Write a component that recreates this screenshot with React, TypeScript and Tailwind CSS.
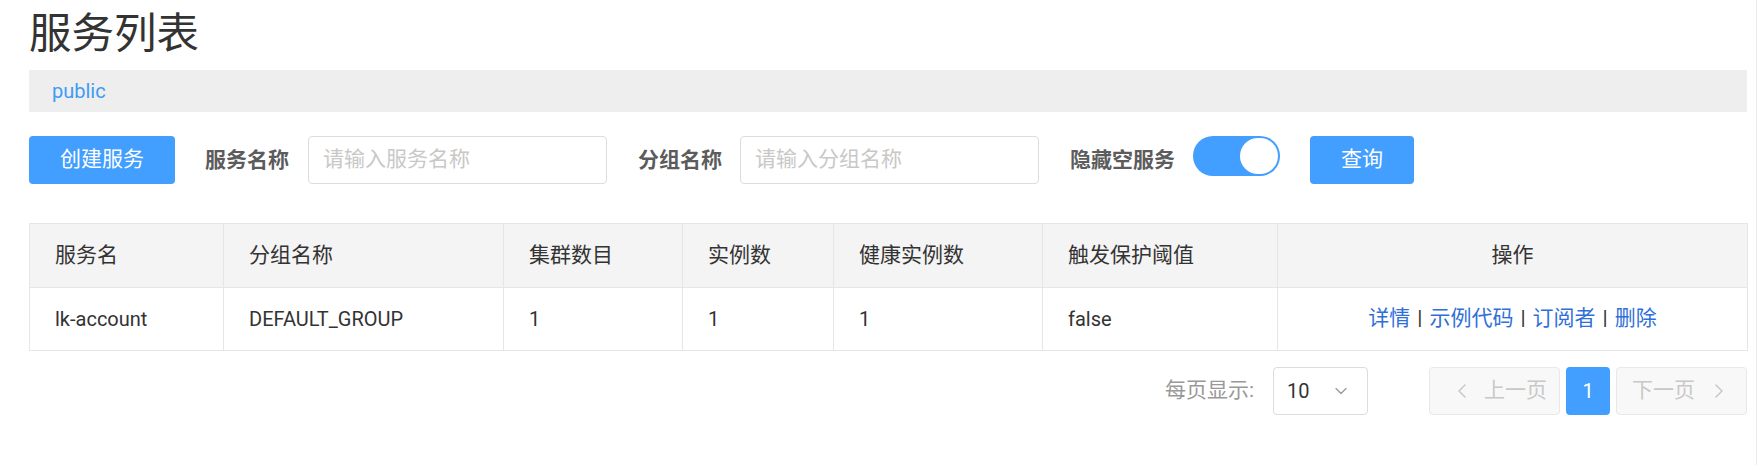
import { ChevronDown, ChevronLeft, ChevronRight } from 'lucide-react';

const columns = [
  { title: '服务名', width: 'w-[194px]' },
  { title: '分组名称', width: 'w-[280px]' },
  { title: '集群数目', width: 'w-[179px]' },
  { title: '实例数', width: 'w-[151px]' },
  { title: '健康实例数', width: 'w-[209px]' },
  { title: '触发保护阈值', width: 'w-[235px]' },
  { title: '操作', width: 'w-[470px]' },
];

const services = [
  {
    name: 'lk-account',
    group: 'DEFAULT_GROUP',
    clusterCount: 1,
    ipCount: 1,
    healthyInstanceCount: 1,
    triggerFlag: 'false',
  },
];

const actions = ['详情', '示例代码', '订阅者', '删除'];

export default function App() {
  return (
    <div className="min-h-[465px] bg-white border-r border-[#ebebeb] pl-[29px] pr-[9px] font-[Roboto,'Noto_Sans_CJK_SC',sans-serif] text-[#333]">
      {/* Title */}
      <h1 className="pt-[10px] text-[42.5px] leading-[48px] font-normal text-[#333]">服务列表</h1>

      {/* Namespace bar */}
      <div className="mt-[12px] h-[42px] bg-[#eeeeee] pl-[23px] flex items-center">
        <span className="text-[20px] text-[#3f9bf4]">public</span>
      </div>

      {/* Toolbar */}
      <div className="mt-[24px] flex items-start">
        <button className="h-[48px] w-[146px] rounded-[4px] bg-[#429eff] text-[21px] text-white">创建服务</button>

        <span className="ml-[30px] h-[48px] leading-[48px] text-[21px] font-bold text-[#5c5c5c]">服务名称</span>
        <div className="ml-[19px] h-[48px] w-[299px] rounded-[4px] border border-[#dcdcdc] pl-[14px] flex items-center text-[21px] text-[#c8c8c8]">
          请输入服务名称
        </div>

        <span className="ml-[31px] h-[48px] leading-[48px] text-[21px] font-bold text-[#5c5c5c]">分组名称</span>
        <div className="ml-[18px] h-[48px] w-[299px] rounded-[4px] border border-[#dcdcdc] pl-[14px] flex items-center text-[21px] text-[#c8c8c8]">
          请输入分组名称
        </div>

        <span className="ml-[31px] h-[48px] leading-[48px] text-[21px] font-bold text-[#5c5c5c]">隐藏空服务</span>
        <div className="ml-[18px] h-[40px] w-[87px] rounded-full bg-[#429eff] flex items-center justify-end pr-[2px]">
          <div className="h-[36px] w-[38px] rounded-full bg-white" />
        </div>

        <button className="ml-[30px] h-[48px] w-[104px] rounded-[4px] bg-[#429eff] text-[21px] text-white">查询</button>
      </div>

      {/* Table */}
      <table className="mt-[39px] w-[1718px] table-fixed border-collapse border border-[#e6e6e6] text-[20px]">
        <thead>
          <tr className="h-[64px] bg-[#f4f4f4]">
            {columns.map((col, i) => (
              <th
                key={col.title}
                className={`${col.width} border border-[#e6e6e6] px-[25px] text-[21px] font-normal text-[#333] ${
                  i === columns.length - 1 ? 'text-center' : 'text-left'
                }`}
              >
                {col.title}
              </th>
            ))}
          </tr>
        </thead>
        <tbody>
          {services.map((s) => (
            <tr key={s.name} className="h-[63px]">
              <td className="border border-[#e6e6e6] px-[25px]">{s.name}</td>
              <td className="border border-[#e6e6e6] px-[25px]">{s.group}</td>
              <td className="border border-[#e6e6e6] px-[25px]">{s.clusterCount}</td>
              <td className="border border-[#e6e6e6] px-[25px]">{s.ipCount}</td>
              <td className="border border-[#e6e6e6] px-[25px]">{s.healthyInstanceCount}</td>
              <td className="border border-[#e6e6e6] px-[25px]">{s.triggerFlag}</td>
              <td className="border border-[#e6e6e6] px-[25px] text-center text-[21px]">
                {actions.map((a, i) => (
                  <span key={a}>
                    {i > 0 && <span className="mx-[7px] text-[#333]">|</span>}
                    <a className="text-[#2f6fd9] cursor-pointer">{a}</a>
                  </span>
                ))}
              </td>
            </tr>
          ))}
        </tbody>
      </table>

      {/* Pagination */}
      <div className="mt-[16px] flex items-center justify-end text-[21px]">
        <span className="text-[#999]">每页显示:</span>
        <div className="ml-[19px] h-[48px] w-[95px] rounded-[4px] border border-[#dcdcdc] pl-[13px] pr-[16px] flex items-center justify-between">
          <span className="text-[20px] text-[#333]">10</span>
          <ChevronDown className="h-[20px] w-[20px] text-[#999]" strokeWidth={1.5} />
        </div>

        <div className="ml-[61px] h-[48px] w-[131px] rounded-[4px] border border-[#e8e8e8] bg-[#f8f8f8] flex items-center pl-[20px] text-[#c8c8c8]">
          <ChevronLeft className="h-[24px] w-[24px]" strokeWidth={1.5} />
          <span className="ml-[10px]">上一页</span>
        </div>
        <div className="ml-[6px] h-[48px] w-[44px] rounded-[4px] bg-[#429eff] flex items-center justify-center text-[20px] text-white">1</div>
        <div className="ml-[6px] h-[48px] w-[131px] rounded-[4px] border border-[#e8e8e8] bg-[#f8f8f8] flex items-center pl-[15px] text-[#c8c8c8]">
          <span>下一页</span>
          <ChevronRight className="ml-[12px] h-[24px] w-[24px]" strokeWidth={1.5} />
        </div>
      </div>
    </div>
  );
}
